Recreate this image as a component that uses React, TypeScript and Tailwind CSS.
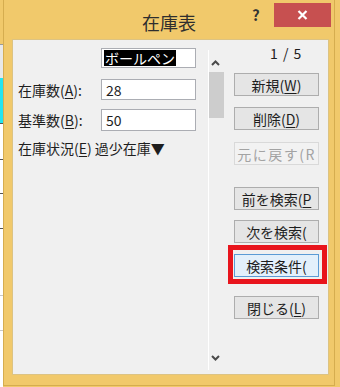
import React from 'react';

const jp = "font-['Noto_Sans_CJK_JP','Noto_Sans',sans-serif]";

interface BtnProps {
  children: React.ReactNode;
  disabled?: boolean;
  focused?: boolean;
  className?: string;
}

const Btn: React.FC<BtnProps> = ({ children, disabled, focused, className = '' }) => {
  let look = 'border-[#adadad] bg-[#e5e5e5] text-[#1e1e1e]';
  if (disabled) look = 'border-[#d9d9d9] bg-[#f2f2f2] text-[#a3a3a3]';
  if (focused) look = 'border-[#5b9bd5] bg-[#e3f0fb] text-[#1e1e1e]';
  return (
    <div
      className={`flex h-[23px] w-[85px] items-center justify-center overflow-hidden whitespace-nowrap border text-[14px] leading-none ${look} ${className}`}
    >
      {children}
    </div>
  );
};

const U: React.FC<{ children: React.ReactNode }> = ({ children }) => (
  <span className="underline underline-offset-2">{children}</span>
);

const Chevron: React.FC<{ up?: boolean }> = ({ up }) => (
  <svg width="9" height="6" viewBox="0 0 9 6">
    <polyline
      points={up ? '1,5 4.5,1.5 8,5' : '1,1 4.5,4.5 8,1'}
      fill="none"
      stroke="#4a4a4a"
      strokeWidth="2"
    />
  </svg>
);

const App: React.FC = () => {
  return (
    <div className={`flex h-[387px] w-[340px] overflow-hidden bg-[#f1c96b] ${jp}`}>
      {/* sheet behind the dialog */}
      <div className="flex w-[3px] flex-col">
        <div className="h-[44px] bg-[#f1c96b]" />
        <div className="h-[34px] border-t border-[#9a9a9a] bg-[#e8e8e8]" />
        <div className="h-[45px] bg-[#22e5f0]" />
        <div className="h-[36px] border-t border-[#555] bg-white" />
        <div className="h-[34px] border-t border-[#555] bg-white" />
        <div className="h-[35px] border-t border-[#555] bg-white" />
        <div className="h-[67px] border-t border-[#555] bg-white" />
        <div className="h-[35px] border-t border-[#c8c8c8] bg-white" />
        <div className="flex-1 border-t border-[#c8c8c8] bg-white" />
      </div>

      {/* dialog window */}
      <div className="flex h-[386px] w-[332px] flex-col border-x border-b border-[#d6ad4f] bg-[#f1c96b]">
        <div className="relative flex h-[39px] items-start">
          <div className="w-full pt-[10px] text-center text-[18px] leading-[24px] text-[#2e2e2e]">在庫表</div>
          <div className="absolute left-[248px] top-[5px] text-[15px] font-bold leading-[20px] text-[#333]">?</div>
          <div className="absolute left-[270px] top-[3px] flex h-[24px] w-[57px] items-center justify-center bg-[#c75050]">
            <svg width="11" height="10" viewBox="0 0 11 10">
              <path d="M1.5 1 L9.5 9 M9.5 1 L1.5 9" stroke="#fff" strokeWidth="2.2" />
            </svg>
          </div>
        </div>

        {/* client area */}
        <div className="ml-[8px] flex h-[336px] w-[317px] border border-[#dcc383] bg-[#f0f0f0] text-[#1e1e1e]">
          {/* form */}
          <div className="flex w-[195px] flex-col pl-[5px] text-[14px]">
            <div className="mt-[8px] ml-[83px] flex h-[20px] w-[95px] items-center border border-[#abadb3] bg-white pl-[2px]">
              <span className="bg-black px-[1px] leading-[16px] text-white">ボールペン</span>
            </div>
            <div className="mt-[11px] flex items-center">
              <span className="w-[83px] leading-[20px]">
                在庫数(<U>A</U>):
              </span>
              <div className="flex h-[21px] w-[95px] items-center border border-[#abadb3] bg-white pl-[4px] leading-none">28</div>
            </div>
            <div className="mt-[9px] flex items-center">
              <span className="w-[83px] leading-[20px]">
                基準数(<U>B</U>):
              </span>
              <div className="flex h-[22px] w-[95px] items-center border border-[#abadb3] bg-white pl-[4px] leading-none">50</div>
            </div>
            <div className="mt-[7px] leading-[20px] whitespace-nowrap">
              在庫状況(<U>E</U>) 過少在庫▼
            </div>
          </div>

          {/* scroll column */}
          <div className="mt-[10px] mb-[4px] flex w-[17px] flex-col border-l border-white">
            <div className="mt-[10px] ml-[2px] flex h-[6px]">
              <Chevron up />
            </div>
            <div className="mt-[6px] h-[46px] w-[15px] bg-[#cdcdcd]" />
            <div className="flex-1" />
            <div className="mb-[9px] ml-[2px] flex h-[6px]">
              <Chevron />
            </div>
          </div>

          {/* buttons */}
          <div className="flex flex-1 flex-col pl-[9px]">
            <div className="mt-[5px] pl-[36px] text-[14px] leading-[16px] tracking-[1px]">1 / 5</div>
            <Btn className="mt-[12px]">
              新規(<U>W</U>)
            </Btn>
            <Btn className="mt-[11px]">
              削除(<U>D</U>)
            </Btn>
            <Btn className="mt-[12px] tracking-[1.5px]" disabled>
              元に戻す(R
            </Btn>
            <Btn className="mt-[22px]">
              前を検索(<U>P</U>
            </Btn>
            <Btn className="mt-[10px]">次を検索(</Btn>
            <div className="relative mt-[11px] w-[85px]">
              <Btn focused>検索条件(</Btn>
              <div className="absolute -left-[6px] -top-[9px] -right-[8px] -bottom-[7px] border-[5px] border-[#e8141c]" />
            </div>
            <Btn className="mt-[19px]">
              閉じる(<U>L</U>)
            </Btn>
          </div>
        </div>
      </div>
    </div>
  );
};

export default App;
